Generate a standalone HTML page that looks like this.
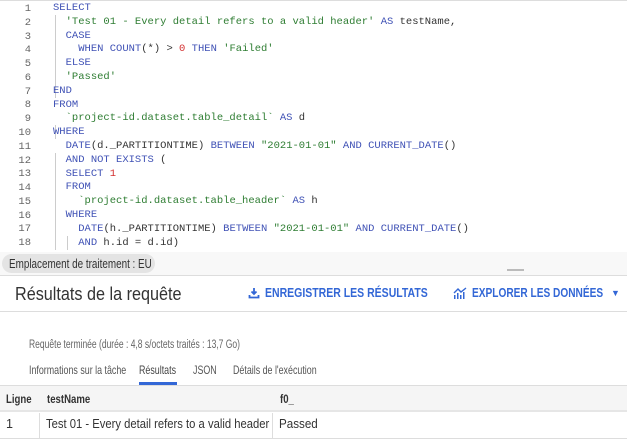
<!DOCTYPE html>
<html><head><meta charset="utf-8"><style>
*{margin:0;padding:0;box-sizing:border-box}
body{width:627px;height:440px;overflow:hidden;background:#fff;font-family:"Liberation Sans",sans-serif;position:relative}
.code{position:absolute;left:0;top:0;width:627px;height:252px;background:#fff;border-top:1px solid #ddd}
.ln{position:absolute;left:0;width:31px;text-align:right;font:10.5px "Liberation Mono",monospace;color:#666}
.cl{position:absolute;left:53px;font:10.5px/13.8px "Liberation Mono",monospace;color:#333;white-space:pre}
.k{color:#3f51b5}.s{color:#2e7d32}.n{color:#d32f2f}
.g{position:absolute;width:1px;background:#ccc}
.pill{position:absolute;left:2px;top:254px;width:153px;height:19px;background:#e4e4e4;border-radius:10px;font-size:13px;color:#333;padding:2px 0 0 7px;white-space:nowrap}
.hr{position:absolute;left:0;width:627px;height:1px;background:#ddd}
.title{position:absolute;left:15px;top:283px;font-size:18.5px;color:#333;transform:scaleX(.875);transform-origin:left;white-space:nowrap}
.btn{position:absolute;top:286px;font-size:12.5px;font-weight:bold;color:#3367d6;white-space:nowrap;transform-origin:left}
.c{display:inline-block;transform-origin:left;white-space:nowrap}
.t{position:absolute;top:363px;font-size:12px;color:#555;white-space:nowrap;transform:scaleX(.74);transform-origin:left}
</style></head><body>
<div class="code">
<div class="g" style="left:55px;top:14px;height:83px"></div>
<div class="g" style="left:55px;top:124px;height:14px"></div>
<div class="g" style="left:55px;top:152px;height:97px"></div>
<div class="g" style="left:67px;top:235px;height:14px"></div>
<div class="ln" style="top:2px">1</div><div class="ln" style="top:16px">2</div><div class="ln" style="top:30px">3</div><div class="ln" style="top:43px">4</div><div class="ln" style="top:57px">5</div><div class="ln" style="top:71px">6</div><div class="ln" style="top:85px">7</div><div class="ln" style="top:98px">8</div><div class="ln" style="top:112px">9</div><div class="ln" style="top:126px">10</div><div class="ln" style="top:140px">11</div><div class="ln" style="top:154px">12</div><div class="ln" style="top:167px">13</div><div class="ln" style="top:181px">14</div><div class="ln" style="top:195px">15</div><div class="ln" style="top:209px">16</div><div class="ln" style="top:222px">17</div><div class="ln" style="top:236px">18</div>
<div class="cl" style="top:1px"><span class="k">SELECT</span>
  <span class="s">'Test 01 - Every detail refers to a valid header'</span> <span class="k">AS</span> testName,
  <span class="k">CASE</span>
    <span class="k">WHEN COUNT</span>(*) &gt; <span class="n">0</span> <span class="k">THEN</span> <span class="s">'Failed'</span>
  <span class="k">ELSE</span>
  <span class="s">'Passed'</span>
<span class="k">END</span>
<span class="k">FROM</span>
  <span class="s">`project-id.dataset.table_detail`</span> <span class="k">AS</span> d
<span class="k">WHERE</span>
  <span class="k">DATE</span>(d._PARTITIONTIME) <span class="k">BETWEEN</span> <span class="s">"2021-01-01"</span> <span class="k">AND CURRENT_DATE</span>()
  <span class="k">AND NOT EXISTS</span> (
  <span class="k">SELECT</span> <span class="n">1</span>
  <span class="k">FROM</span>
    <span class="s">`project-id.dataset.table_header`</span> <span class="k">AS</span> h
  <span class="k">WHERE</span>
    <span class="k">DATE</span>(h._PARTITIONTIME) <span class="k">BETWEEN</span> <span class="s">"2021-01-01"</span> <span class="k">AND CURRENT_DATE</span>()
    <span class="k">AND</span> h.id = d.id)</div>
</div>
<div style="position:absolute;left:0;top:252px;width:627px;height:23px;background:#f8f8f8"></div>
<div class="pill"><span class="c" style="transform:scaleX(.76)">Emplacement de traitement : EU</span></div>
<div style="position:absolute;left:507px;top:269px;width:17px;height:2px;background:#bbb"></div>
<div class="hr" style="top:275px"></div>
<div class="title">Résultats de la requête</div>
<svg style="position:absolute;left:248px;top:287px" width="12" height="12" viewBox="0 0 12 12"><path d="M6 1v6M3.5 4.5L6 7l2.5-2.5M1.5 8v2.5h9V8" stroke="#3367d6" stroke-width="1.8" fill="none"/></svg>
<div class="btn" style="left:265px;transform:scaleX(.84)">ENREGISTRER LES RÉSULTATS</div>
<svg style="position:absolute;left:453px;top:287px" width="14" height="12" viewBox="0 0 14 12"><path d="M1 6l4-4 3 3 5-4" stroke="#3367d6" stroke-width="1.4" fill="none"/><path d="M1 8h1.5v4H1zM4 6h1.5v6H4zM7 8h1.5v4H7zM10 5h1.5v7H10z" fill="#3367d6"/></svg>
<div class="btn" style="left:472px;transform:scaleX(.81)">EXPLORER LES DONNÉES</div>
<div style="position:absolute;left:611px;top:288px;font-size:9px;color:#3367d6">▼</div>
<div class="hr" style="top:311px"></div>
<div style="position:absolute;left:29px;top:339px;font-size:11.5px;color:#666;white-space:nowrap;transform:scaleX(.74);transform-origin:left">Requête terminée (durée : 4,8 s/octets traités : 13,7 Go)</div>
<div class="t" style="left:29px">Informations sur la tâche</div>
<div class="t" style="left:139px;color:#444">Résultats</div>
<div style="position:absolute;left:139px;top:382px;width:38px;height:3px;background:#3367d6"></div>
<div class="t" style="left:193px">JSON</div>
<div class="t" style="left:233px">Détails de l'exécution</div>
<div class="hr" style="top:385px"></div>
<div style="position:absolute;left:0;top:386px;width:627px;height:26px;background:#f5f5f5;border-bottom:2px solid #e6e6e6"></div>
<div style="position:absolute;left:6px;top:392px;font-size:12px;font-weight:bold;color:#333;transform:scaleX(.8);transform-origin:left">Ligne</div>
<div style="position:absolute;left:47px;top:392px;font-size:12px;font-weight:bold;color:#333;transform:scaleX(.8);transform-origin:left">testName</div>
<div style="position:absolute;left:280px;top:392px;font-size:12px;font-weight:bold;color:#333;transform:scaleX(.8);transform-origin:left">f0_</div>
<div style="position:absolute;left:39px;top:413px;width:1px;height:25px;background:#ddd"></div>
<div style="position:absolute;left:272px;top:413px;width:1px;height:25px;background:#ddd"></div>
<div style="position:absolute;left:6px;top:417px;font-size:12.5px;color:#333">1</div>
<div style="position:absolute;left:46px;top:417px;font-size:12.5px;color:#333;white-space:nowrap;transform:scaleX(.9);transform-origin:left">Test 01 - Every detail refers to a valid header</div>
<div style="position:absolute;left:279px;top:417px;font-size:12.5px;color:#333;transform:scaleX(.93);transform-origin:left">Passed</div>
<div class="hr" style="top:438px"></div>
</body></html>
